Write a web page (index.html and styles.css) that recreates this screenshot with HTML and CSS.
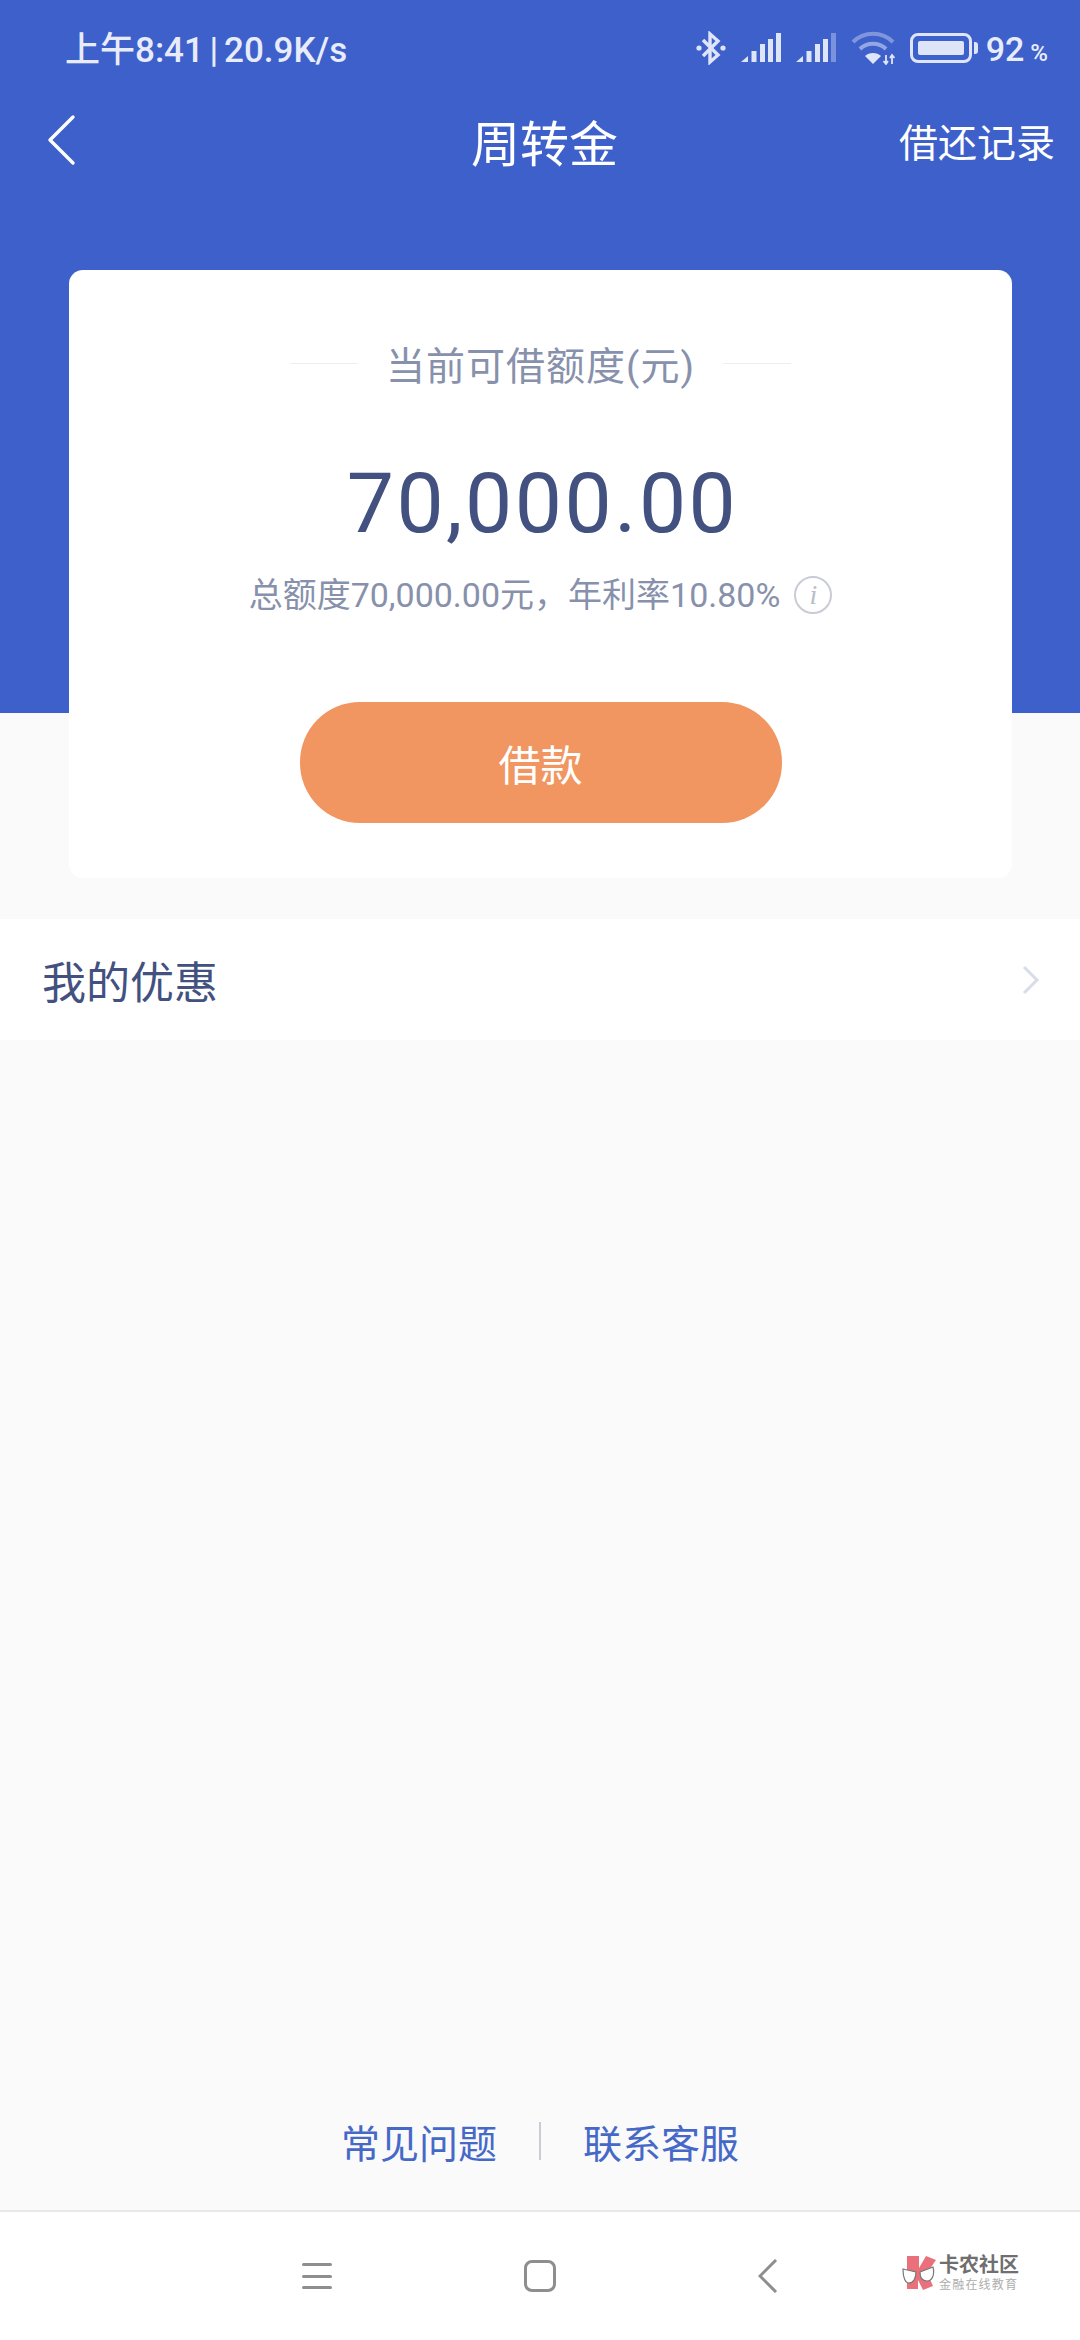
FILE: index.html
```html
<!DOCTYPE html>
<html lang="zh-CN">
<head>
    <meta charset="UTF-8">
    <meta name="viewport" content="width=device-width, initial-scale=1.0">
    <title>周转金</title>
    <link rel="stylesheet" href="styles.css">
</head>
<body>
    <div class="page">
        <header class="hero">
            <div class="status-bar">
                <span class="status-time">上午8:41 | 20.9K/s</span>
                <div class="status-icons">
                    <svg class="icon-bt" viewBox="0 0 30 34" width="30" height="34">
                        <path d="M7 9 L22 24 L14 31 L14 3 L22 10 L7 25" fill="none" stroke="#dfe5f8" stroke-width="3.4"/>
                        <circle cx="3" cy="17" r="2.6" fill="#dfe5f8"/>
                        <circle cx="27" cy="17" r="2.6" fill="#dfe5f8"/>
                    </svg>
                    <svg class="icon-signal" viewBox="0 0 40 30" width="40" height="30">
                        <path d="M0 29 L7 23 V29 Z M10.5 18 H15.5 V29 H10.5 Z M19 11 H24 V29 H19 Z M27 6 H32 V29 H27 Z" fill="#dfe5f8"/>
                        <rect x="35" y="0" width="5" height="29" fill="#dfe5f8"/>
                    </svg>
                    <svg class="icon-signal" viewBox="0 0 40 30" width="40" height="30">
                        <path d="M0 29 L7 23 V29 Z M10.5 18 H15.5 V29 H10.5 Z M19 11 H24 V29 H19 Z M27 6 H32 V29 H27 Z" fill="#dfe5f8"/>
                        <rect x="35" y="0" width="5" height="29" fill="#7b93dd"/>
                    </svg>
                    <svg class="icon-wifi" viewBox="0 0 44 34" width="44" height="34">
                        <path d="M2 11 C13 0 31 0 42 11" fill="none" stroke="#7f96dd" stroke-width="4"/>
                        <path d="M9 18 C16 11 28 11 35 18" fill="none" stroke="#93a7e4" stroke-width="4"/>
                        <path d="M14 25 C18 21 26 21 30 25 L22 33 Z" fill="#dfe5f8"/>
                        <path d="M35 24 V33 M32.5 30 L35 33 L37 30 M41 33 V24 M39 27 L41 24 L43.5 27" fill="none" stroke="#dfe5f8" stroke-width="1.8"/>
                    </svg>
                    <div class="battery">
                        <div class="battery-body"><div class="battery-fill"></div></div>
                        <div class="battery-cap"></div>
                    </div>
                    <span class="battery-text">92<small>%</small></span>
                </div>
            </div>
            <nav class="title-bar">
                <svg class="back-icon" viewBox="0 0 30 52" width="30" height="52">
                    <path d="M27 3 L4 26 L27 49" fill="none" stroke="#fff" stroke-width="3.4" stroke-linecap="round" stroke-linejoin="round"/>
                </svg>
                <h1 class="page-title">周转金</h1>
                <a class="title-link">借还记录</a>
            </nav>
            <section class="card">
                <div class="card-head">
                    <span class="head-line"></span>
                    <span class="head-text">当前可借额度(元)</span>
                    <span class="head-line"></span>
                </div>
                <div class="amount">70,000.00</div>
                <div class="summary">
                    <span>总额度70,000.00元，年利率10.80%</span>
                    <span class="info-icon">i</span>
                </div>
                <button class="borrow-btn">借款</button>
            </section>
        </header>

        <div class="promo-row">
            <span class="promo-text">我的优惠</span>
            <svg viewBox="0 0 18 30" width="18" height="30">
                <path d="M2 2 L15 15 L2 28" fill="none" stroke="#d9dde9" stroke-width="3"/>
            </svg>
        </div>

        <div class="help-links">
            <a>常见问题</a>
            <span class="help-divider"></span>
            <a>联系客服</a>
        </div>

        <footer class="nav-bar">
            <div class="nav-menu"><i></i><i></i><i></i></div>
            <div class="nav-home"></div>
            <svg class="nav-back" viewBox="0 0 20 34" width="20" height="34">
                <path d="M18 1 L2 17 L18 33" fill="none" stroke="#8e8e8e" stroke-width="3"/>
            </svg>
            <div class="watermark">
                <svg viewBox="0 0 36 36" width="36" height="36">
                    <path d="M5 1 H17 V13 L24 1 L34 5 L25 18 L31 31 L21 35 L16 25 V34 H5 Z" fill="#ea717c"/>
                    <path d="M1 14 L14 17 C14 24 11 28 7 28 C3 28 1 22 1 14 Z M18 17 L31 12 C33 20 30 26 25 26 C21 26 18 23 18 17 Z" fill="#fff" stroke="#777" stroke-width="1.2"/>
                </svg>
                <div class="watermark-text">
                    <span class="watermark-title">卡农社区</span>
                    <span class="watermark-sub">金融在线教育</span>
                </div>
            </div>
        </footer>
    </div>
</body>
</html>
```

FILE: styles.css
```css
:root {
    --blue: #3e60cb;
    --navy: #425180;
    --gray-text: #8891ab;
    --bg: #fafafa;
}

* {
    margin: 0;
    padding: 0;
    box-sizing: border-box;
    font-family: Roboto, "Noto Sans CJK SC", sans-serif;
}

body {
    background: var(--bg);
}

.page {
    width: 1080px;
    height: 2340px;
    display: flex;
    flex-direction: column;
    overflow: hidden;
}

.hero {
    height: 713px;
    background: var(--blue);
    flex-shrink: 0;
}

.status-bar {
    height: 100px;
    padding: 0 32px 4px 65px;
    display: flex;
    justify-content: space-between;
    align-items: center;
}

.status-time {
    color: #e8ecfa;
    font-size: 35px;
    font-weight: 500;
    word-spacing: -3px;
    margin-bottom: 3px;
}

.status-icons {
    display: flex;
    align-items: center;
    gap: 15px;
}

.battery {
    display: flex;
    align-items: center;
    gap: 2px;
}

.battery-body {
    width: 62px;
    height: 30px;
    padding: 5px;
    border: 3px solid #dfe5f8;
    border-radius: 8px;
}

.battery-fill {
    height: 100%;
    background: #dfe5f8;
    border-radius: 2px;
}

.battery-cap {
    width: 4px;
    height: 12px;
    background: #dfe5f8;
    border-radius: 0 3px 3px 0;
}

.battery-text {
    color: #e8ecfa;
    font-size: 34px;
    font-weight: 500;
    margin: 2px 0 0 -7px;
}

.battery-text small {
    font-size: 24px;
    margin-left: 6px;
}

.title-bar {
    height: 70px;
    margin-top: 5px;
    padding: 0 25px 0 46px;
    display: flex;
    align-items: center;
    justify-content: space-between;
}

.page-title {
    color: #fff;
    font-size: 49px;
    font-weight: 400;
    margin-left: 114px;
}

.title-link {
    color: #fff;
    font-size: 39px;
}

.card {
    width: 943px;
    height: 608px;
    margin: 95px 0 0 69px;
    background: #fff;
    border-radius: 14px;
    display: flex;
    flex-direction: column;
    align-items: center;
}

.card-head {
    margin-top: 70px;
    display: flex;
    align-items: center;
    gap: 28px;
    height: 46px;
}

.head-line {
    width: 68px;
    height: 1px;
    background: #eceef2;
}

.head-text {
    color: var(--gray-text);
    font-size: 39px;
    letter-spacing: 1px;
}

.amount {
    margin-top: 68px;
    padding-left: 4px;
    color: var(--navy);
    font-size: 84px;
    line-height: 100px;
    letter-spacing: 2.5px;
}

.summary {
    margin-top: 19px;
    display: flex;
    align-items: center;
    gap: 14px;
    color: var(--gray-text);
    font-size: 34px;
    line-height: 44px;
}

.info-icon {
    width: 38px;
    height: 38px;
    border: 2px solid #c9ccd6;
    border-radius: 50%;
    color: #b9bdca;
    font-family: "Liberation Serif", serif;
    font-style: italic;
    font-size: 28px;
    line-height: 34px;
    text-align: center;
}

.borrow-btn {
    margin-top: 85px;
    width: 482px;
    height: 121px;
    border: none;
    border-radius: 60px;
    background: #f19661;
    color: #fff;
    font-size: 42px;
}

.promo-row {
    margin-top: 206px;
    height: 121px;
    background: #fff;
    padding: 0 40px 0 42px;
    display: flex;
    align-items: center;
    justify-content: space-between;
}

.promo-text {
    color: var(--navy);
    font-size: 44px;
}

.help-links {
    margin-top: auto;
    height: 90px;
    margin-bottom: 24px;
    display: flex;
    align-items: center;
    justify-content: center;
    gap: 42px;
    color: #4669c8;
    font-size: 39px;
}

.help-divider {
    width: 2px;
    height: 38px;
    background: #c9ccd6;
}

.nav-bar {
    height: 130px;
    flex-shrink: 0;
    background: #fff;
    border-top: 2px solid #e8e8e8;
    display: flex;
    align-items: center;
    padding: 0 0 0 302px;
}

.nav-menu {
    width: 30px;
    height: 26px;
    display: flex;
    flex-direction: column;
    justify-content: space-between;
}

.nav-menu i {
    display: block;
    height: 3px;
    background: #8e8e8e;
    border-radius: 2px;
}

.nav-home {
    margin-left: 192px;
    width: 32px;
    height: 32px;
    border: 3px solid #8e8e8e;
    border-radius: 8px;
}

.nav-back {
    margin-left: 202px;
}

.watermark {
    margin-left: 124px;
    margin-top: -6px;
    display: flex;
    align-items: center;
    gap: 1px;
}

.watermark-text {
    display: flex;
    flex-direction: column;
    line-height: 1;
}

.watermark-title {
    color: #6f6f6f;
    font-size: 20px;
    font-weight: 700;
}

.watermark-sub {
    color: #aeaeae;
    font-size: 12px;
    margin-top: 4px;
    letter-spacing: 1.2px;
}
```
